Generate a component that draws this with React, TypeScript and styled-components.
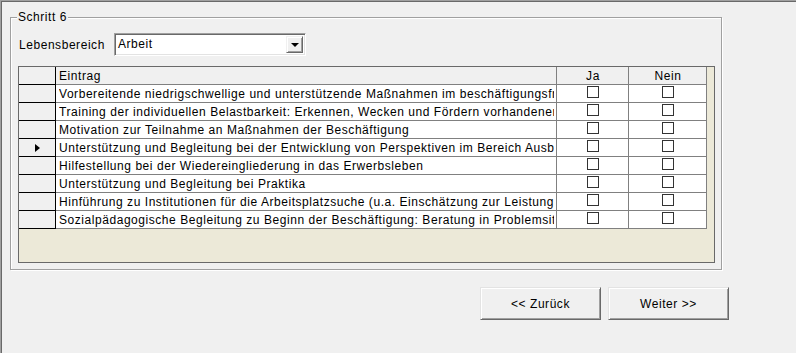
import React from "react";
import styled, { createGlobalStyle } from "styled-components";

const GlobalStyle = createGlobalStyle`
  html, body {
    margin: 0;
    padding: 0;
    background: #f0f0f0;
  }
  body {
    font-family: "Liberation Sans", Arial, sans-serif;
    font-size: 12px;
    letter-spacing: 0.55px;
    color: #000;
  }
`;

const Window = styled.div`
  box-sizing: border-box;
  width: 796px;
  height: 353px;
  background: #f0f0f0;
  border-top: 1px solid #a0a0a0;
  border-left: 1px solid #a0a0a0;
  box-shadow: inset 1px 1px 0 #696969;
  padding: 16px 0 0 9px;
  display: flex;
  flex-direction: column;
  overflow: hidden;
`;

const GroupBox = styled.div`
  position: relative;
  box-sizing: border-box;
  width: 712px;
  height: 253px;
  border: 1px solid #a0a0a0;
  box-shadow: inset 1px 1px 0 #fff, 1px 1px 0 #fff;
  padding: 15px 0 0 7px;
  display: flex;
  flex-direction: column;
`;

const Legend = styled.span`
  position: absolute;
  top: -9px;
  left: 6px;
  padding: 0 1px;
  background: #f0f0f0;
  line-height: 16px;
  white-space: nowrap;
`;

const FieldRow = styled.div`
  display: flex;
  align-items: center;
  height: 23px;
`;

const FieldLabel = styled.label`
  width: 95px;
  padding-left: 1px;
  white-space: nowrap;
`;

const Combo = styled.div`
  box-sizing: border-box;
  width: 192px;
  height: 23px;
  display: flex;
  border-top: 1px solid #a0a0a0;
  border-left: 1px solid #a0a0a0;
  border-right: 1px solid #fff;
  border-bottom: 1px solid #fff;
  box-shadow: inset 1px 1px 0 #696969, inset -1px -1px 0 #e3e3e3;
  background: #fff;
  padding: 2px;
`;

const ComboText = styled.div`
  flex: 1;
  padding-left: 1px;
  line-height: 17px;
`;

const ComboButton = styled.div`
  box-sizing: border-box;
  width: 17px;
  background: #f0f0f0;
  border-top: 1px solid #f0f0f0;
  border-left: 1px solid #f0f0f0;
  border-right: 1px solid #696969;
  border-bottom: 1px solid #696969;
  box-shadow: inset 1px 1px 0 #fff, inset -1px -1px 0 #a0a0a0;
  display: flex;
  align-items: center;
  justify-content: center;
`;

const DownArrow = styled.span`
  width: 0;
  height: 0;
  border-left: 4px solid transparent;
  border-right: 4px solid transparent;
  border-top: 4px solid #000;
  margin-top: 1px;
`;

const DataGrid = styled.div`
  box-sizing: border-box;
  margin-top: 10px;
  width: 697px;
  height: 197px;
  border: 1px solid #696969;
  background: #ece9d8;
`;

const GridTable = styled.div`
  display: grid;
  grid-template-columns: 37px 501px 72px 78px;
  grid-auto-rows: 18px;
  width: 688px;
`;

const BaseCell = styled.div`
  box-sizing: border-box;
  height: 18px;
  border-right: 1px solid #808080;
  border-bottom: 1px solid #808080;
  overflow: hidden;
`;

const RowHeaderCell = styled(BaseCell)`
  background: #f0f0f0;
  border-right-color: #000;
  border-bottom-color: #000;
  display: flex;
  align-items: center;
  justify-content: center;
`;

const HeaderCell = styled(BaseCell)<{ $center?: boolean }>`
  background: #f0f0f0;
  padding: 2px 2px 0 3px;
  line-height: 15px;
  white-space: nowrap;
  text-align: ${(p) => (p.$center ? "center" : "left")};
`;

const TextCell = styled(BaseCell)`
  background: #fff;
  padding: 2px 2px 0 3px;
`;

const CellText = styled.div`
  line-height: 15px;
  white-space: nowrap;
  overflow: hidden;
`;

const CheckCell = styled(BaseCell)`
  background: #fff;
  display: flex;
  justify-content: center;
  padding-top: 1px;
`;

const CheckBox = styled.span`
  box-sizing: border-box;
  width: 12px;
  height: 12px;
  border: 1px solid #333;
  background: #fff;
`;

const RowPointer = styled.span`
  width: 0;
  height: 0;
  border-left: 5px solid #000;
  border-top: 4.5px solid transparent;
  border-bottom: 4.5px solid transparent;
  margin-left: 1px;
`;

const ButtonRow = styled.div`
  display: flex;
  gap: 7px;
  margin-top: 17px;
  padding-left: 470px;
`;

const Button = styled.button`
  box-sizing: border-box;
  width: 121px;
  height: 33px;
  font-family: "Liberation Sans", Arial, sans-serif;
  font-size: 12px;
  letter-spacing: 0.55px;
  color: #000;
  background: #f0f0f0;
  border-top: 1px solid #e3e3e3;
  border-left: 1px solid #e3e3e3;
  border-right: 1px solid #696969;
  border-bottom: 1px solid #696969;
  box-shadow: inset 1px 1px 0 #fff, inset -1px -1px 0 #a0a0a0;
  padding: 0;
  cursor: default;
`;

const rows = [
  "Vorbereitende niedrigschwellige und unterstützende Maßnahmen im beschäftigungsfreien Raum",
  "Training der individuellen Belastbarkeit: Erkennen, Wecken und Fördern vorhandener Ressourcen",
  "Motivation zur Teilnahme an Maßnahmen der Beschäftigung",
  "Unterstützung und Begleitung bei der Entwicklung von Perspektiven im Bereich Ausbildung und Beruf",
  "Hilfestellung bei der Wiedereingliederung in das Erwerbsleben",
  "Unterstützung und Begleitung bei Praktika",
  "Hinführung zu Institutionen für die Arbeitsplatzsuche (u.a. Einschätzung zur Leistungsfähigkeit)",
  "Sozialpädagogische Begleitung zu Beginn der Beschäftigung: Beratung in Problemsituationen",
];

const currentRow = 3;

export default function App() {
  return (
    <>
      <GlobalStyle />
      <Window>
        <GroupBox>
          <Legend>Schritt 6</Legend>
          <FieldRow>
            <FieldLabel>Lebensbereich</FieldLabel>
            <Combo>
              <ComboText>Arbeit</ComboText>
              <ComboButton>
                <DownArrow />
              </ComboButton>
            </Combo>
          </FieldRow>
          <DataGrid>
            <GridTable>
              <RowHeaderCell />
              <HeaderCell>Eintrag</HeaderCell>
              <HeaderCell $center>Ja</HeaderCell>
              <HeaderCell $center>Nein</HeaderCell>
              {rows.map((text, i) => (
                <React.Fragment key={i}>
                  <RowHeaderCell>{i === currentRow && <RowPointer />}</RowHeaderCell>
                  <TextCell>
                    <CellText>{text}</CellText>
                  </TextCell>
                  <CheckCell>
                    <CheckBox />
                  </CheckCell>
                  <CheckCell>
                    <CheckBox />
                  </CheckCell>
                </React.Fragment>
              ))}
            </GridTable>
          </DataGrid>
        </GroupBox>
        <ButtonRow>
          <Button>&lt;&lt; Zurück</Button>
          <Button>Weiter &gt;&gt;</Button>
        </ButtonRow>
      </Window>
    </>
  );
}
